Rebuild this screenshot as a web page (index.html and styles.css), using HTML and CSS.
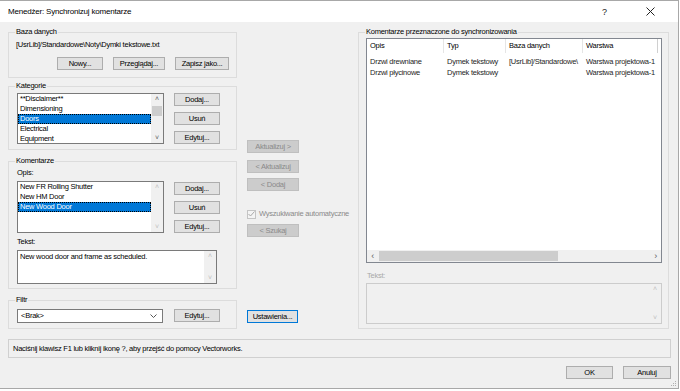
FILE: index.html
```html
<!DOCTYPE html>
<html lang="pl">
<head>
    <meta charset="utf-8">
    <link rel="stylesheet" href="styles.css">
</head>
<body>
<div class="window">
    <div class="titlebar">
        <span class="title">Menedżer: Synchronizuj komentarze</span>
        <span class="tb-help">?</span>
        <span class="tb-close">
            <svg width="9" height="9" viewBox="0 0 9 9"><path d="M0.5 0.5 L8.5 8.5 M8.5 0.5 L0.5 8.5" stroke="#222" stroke-width="1"/></svg>
        </span>
    </div>
    <div class="main">
        <div class="col-left">
            <div class="group g-baza">
                <div class="group-title">Baza danych</div>
                <div class="path">[UsrLib]/Standardowe\Noty\Dymki tekstowe.txt</div>
                <div class="btn-row">
                    <button class="btn w-nowy">Nowy...</button>
                    <button class="btn w-przeg">Przeglądaj...</button>
                    <button class="btn w-zapisz">Zapisz jako...</button>
                </div>
            </div>

            <div class="group g-kat">
                <div class="group-title">Kategorie</div>
                <div class="list-row">
                    <div class="listbox lb-kat">
                        <div class="items">
                            <div class="item">**Disclaimer**</div>
                            <div class="item">Dimensioning</div>
                            <div class="item selected">Doors</div>
                            <div class="item">Electrical</div>
                            <div class="item">Equipment</div>
                        </div>
                        <div class="vscroll">
                            <span class="arrow">&#x2C4;</span>
                            <span class="track"><span class="thumb thumb-kat"></span></span>
                            <span class="arrow">&#x2C5;</span>
                        </div>
                    </div>
                    <div class="btn-col">
                        <button class="btn">Dodaj...</button>
                        <button class="btn">Usuń</button>
                        <button class="btn">Edytuj...</button>
                    </div>
                </div>
            </div>

            <div class="group g-kom">
                <div class="group-title">Komentarze</div>
                <div class="label l-opis">Opis:</div>
                <div class="list-row">
                    <div class="listbox lb-kom">
                        <div class="items">
                            <div class="item">New FR Rolling Shutter</div>
                            <div class="item">New HM Door</div>
                            <div class="item selected">New Wood Door</div>
                        </div>
                        <div class="vscroll off">
                            <span class="arrow">&#x2C4;</span>
                            <span class="track"></span>
                            <span class="arrow">&#x2C5;</span>
                        </div>
                    </div>
                    <div class="btn-col btn-col-kom">
                        <button class="btn">Dodaj...</button>
                        <button class="btn">Usuń</button>
                        <button class="btn">Edytuj...</button>
                    </div>
                </div>
                <div class="label l-tekst">Tekst:</div>
                <div class="textbox tb-kom">
                    <div class="tb-text">New wood door and frame as scheduled.</div>
                    <div class="vscroll off">
                        <span class="arrow">&#x2C4;</span>
                        <span class="track"></span>
                        <span class="arrow">&#x2C5;</span>
                    </div>
                </div>
            </div>

            <div class="group g-filtr">
                <div class="group-title">Filtr</div>
                <div class="filtr-row">
                    <div class="select">
                        <span>&lt;Brak&gt;</span>
                        <svg width="7" height="4" viewBox="0 0 7 4"><path d="M0.5 0.5 L3.5 3.5 L6.5 0.5" fill="none" stroke="#555" stroke-width="1"/></svg>
                    </div>
                    <button class="btn">Edytuj...</button>
                </div>
            </div>
        </div>

        <div class="col-mid">
            <button class="btn disabled b-akt1">Aktualizuj &gt;</button>
            <button class="btn disabled b-akt2">&lt; Aktualizuj</button>
            <button class="btn disabled b-dodaj">&lt; Dodaj</button>
            <div class="check-row">
                <span class="checkbox">
                    <svg width="7" height="6" viewBox="0 0 7 6"><path d="M0.5 3 L2.5 5 L6.5 0.5" fill="none" stroke="#a8a8a8" stroke-width="1"/></svg>
                </span>
                <span class="check-label">Wyszukiwanie automatyczne</span>
            </div>
            <button class="btn disabled b-szukaj">&lt; Szukaj</button>
            <button class="btn default b-ust">Ustawienia...</button>
        </div>

        <div class="group g-sync">
            <div class="group-title">Komentarze przeznaczone do synchronizowania</div>
            <div class="listview">
                <div class="lv-head">
                    <span class="c-opis">Opis</span>
                    <span class="c-typ">Typ</span>
                    <span class="c-baza">Baza danych</span>
                    <span class="c-warstwa">Warstwa</span>
                </div>
                <div class="lv-body">
                    <div class="lv-row">
                        <span class="c-opis">Drzwi drewniane</span>
                        <span class="c-typ">Dymek tekstowy</span>
                        <span class="c-baza">[UsrLib]/Standardowe\</span>
                        <span class="c-warstwa">Warstwa projektowa-1</span>
                    </div>
                    <div class="lv-row">
                        <span class="c-opis">Drzwi płycinowe</span>
                        <span class="c-typ">Dymek tekstowy</span>
                        <span class="c-baza"></span>
                        <span class="c-warstwa">Warstwa projektowa-1</span>
                    </div>
                </div>
                <div class="hscroll">
                    <span class="arrow">&#x2039;</span>
                    <span class="htrack"><span class="hthumb"></span></span>
                    <span class="arrow">&#x203A;</span>
                </div>
            </div>
            <div class="label l-tekst2">Tekst:</div>
            <div class="textbox tb-sync">
                <div class="tb-text"></div>
                <div class="vscroll off">
                    <span class="arrow">&#x2C4;</span>
                    <span class="track"></span>
                    <span class="arrow">&#x2C5;</span>
                </div>
            </div>
        </div>
    </div>

    <div class="status">Naciśnij klawisz F1 lub kliknij ikonę ?, aby przejść do pomocy Vectorworks.</div>

    <div class="footer">
        <button class="btn w-ok">OK</button>
        <button class="btn w-anuluj">Anuluj</button>
        <svg class="grip" width="6" height="6" viewBox="0 0 6 6">
            <rect x="4" y="0" width="1" height="1" fill="#b0b0b0"/>
            <rect x="2" y="2" width="1" height="1" fill="#b0b0b0"/>
            <rect x="4" y="2" width="1" height="1" fill="#b0b0b0"/>
            <rect x="0" y="4" width="1" height="1" fill="#b0b0b0"/>
            <rect x="2" y="4" width="1" height="1" fill="#b0b0b0"/>
            <rect x="4" y="4" width="1" height="1" fill="#b0b0b0"/>
        </svg>
    </div>
</div>
</body>
</html>
```

FILE: styles.css
```css
* {
    box-sizing: border-box;
}

body {
    margin: 0;
    background: #ffffff;
    font-family: "Liberation Sans", Arial, sans-serif;
    font-size: 7.5px;
    letter-spacing: -0.25px;
    line-height: 10px;
    color: #000000;
}

.window {
    width: 679px;
    height: 389px;
    background: #f0f0f0;
    border-top: 1px solid #a8a8a8;
    border-right: 1px solid #a8a8a8;
    border-bottom: 1px solid #a8a8a8;
    position: relative;
}

/* title bar */
.titlebar {
    height: 21px;
    background: #ffffff;
    display: flex;
    align-items: center;
    padding-left: 8px;
}
.title {
    flex: 1;
    font-size: 8px;
    letter-spacing: -0.2px;
}
.tb-help {
    width: 14px;
    font-size: 9px;
    color: #222;
    margin-right: 30px;
}
.tb-close {
    width: 32px;
    display: flex;
}

/* main area */
.main {
    display: flex;
    padding: 10px 0 0 8px;
    height: 307px;
}
.col-left {
    width: 229px;
}
.col-mid {
    width: 111px;
    margin-left: 10px;
    display: flex;
    flex-direction: column;
    align-items: flex-start;
}

/* group boxes */
.group {
    border: 1px solid #dcdcdc;
    padding: 0 0 0 7px;
}
.group-title {
    margin-top: -6px;
    margin-left: -1px;
    width: fit-content;
    padding: 0 1px;
    background: #f0f0f0;
}
.g-baza {
    height: 46px;
}
.g-kat {
    height: 64px;
    margin-top: 8px;
}
.g-kom {
    height: 128px;
    margin-top: 11px;
}
.g-filtr {
    height: 29px;
    margin-top: 11px;
}
.g-sync {
    width: 311px;
    height: 297px;
}

.path {
    margin-top: 3px;
}
.label {
    margin-left: 1px;
}

/* buttons */
.btn {
    font-family: inherit;
    font-size: 7.5px;
    letter-spacing: -0.25px;
    line-height: 11px;
    height: 13px;
    width: 46px;
    padding: 0;
    margin: 0;
    background: #e1e1e1;
    border: 1px solid #adadad;
    color: #000;
    text-align: center;
}
.btn.disabled {
    background: #cccccc;
    border-color: #bfbfbf;
    color: #8a8a8a;
}
.btn.default {
    border-color: #0078d7;
}

.btn-row {
    display: flex;
    gap: 10px;
    margin-top: 7px;
    padding-left: 41px;
}
.w-nowy {
    width: 46px;
}
.w-przeg {
    width: 52px;
}
.w-zapisz {
    width: 54px;
}

.list-row {
    display: flex;
    gap: 10px;
    padding-left: 1px;
}
.btn-col {
    display: flex;
    flex-direction: column;
    gap: 6px;
    margin-top: 2px;
}
.btn-col-kom {
    margin-top: 1px;
}

/* list boxes */
.listbox {
    background: #ffffff;
    border: 1px solid #7a7a7a;
    display: flex;
    width: 147px;
}
.lb-kat {
    height: 51px;
    margin-top: 2px;
}
.lb-kom {
    height: 52px;
}
.l-opis {
    margin-top: 2px;
    margin-bottom: 3px;
}
.items {
    flex: 1;
    overflow: hidden;
}
.item {
    height: 10px;
    line-height: 10px;
    padding-left: 2px;
    white-space: nowrap;
}
.item.selected {
    background: #0078d7;
    color: #ffffff;
    outline: 1px dotted #000;
    outline-offset: -1px;
}

.vscroll {
    width: 12px;
    display: flex;
    flex-direction: column;
    align-items: center;
    background: #f0f0f0;
}
.vscroll .arrow {
    height: 10px;
    line-height: 10px;
    font-size: 7px;
    color: #606060;
}
.vscroll.off .arrow {
    color: #bfbfbf;
}
.vscroll .track {
    flex: 1;
    width: 100%;
}
.thumb-kat {
    display: block;
    margin: 2px 1px 0;
    height: 10px;
    background: #cdcdcd;
}

.l-tekst {
    margin-top: 4px;
    margin-bottom: 3px;
}
.textbox {
    background: #ffffff;
    border: 1px solid #7a7a7a;
    display: flex;
}
.tb-kom {
    width: 200px;
    height: 34px;
    margin-left: 1px;
}
.tb-text {
    flex: 1;
    padding: 1px 2px;
}

.filtr-row {
    display: flex;
    gap: 11px;
    margin-top: 4px;
    padding-left: 1px;
}
.select {
    width: 146px;
    height: 14px;
    background: #ffffff;
    border: 1px solid #7a7a7a;
    display: flex;
    align-items: center;
    justify-content: space-between;
    padding: 0 5px 0 3px;
}

/* middle column */
.col-mid .btn {
    width: 52px;
}
.b-akt1 {
    margin-top: 108px;
}
.b-akt2 {
    margin-top: 7px;
}
.b-dodaj {
    margin-top: 5px;
}
.check-row {
    display: flex;
    align-items: center;
    gap: 3px;
    margin-top: 18px;
    height: 10px;
}
.checkbox {
    width: 9px;
    height: 9px;
    border: 1px solid #c4c4c4;
    background: #f4f4f4;
    display: flex;
    align-items: center;
    justify-content: center;
}
.check-label {
    color: #8a8a8a;
    white-space: nowrap;
}
.b-szukaj {
    margin-top: 5px;
}
.col-mid .b-ust {
    margin-top: 73px;
    width: 51px;
}

/* right group */
.listview {
    margin-top: 1px;
    width: 296px;
    height: 225px;
    border: 1px solid #828790;
    background: #ffffff;
    display: flex;
    flex-direction: column;
}
.lv-head,
.lv-row {
    display: flex;
    white-space: nowrap;
}
.lv-head {
    height: 14px;
    line-height: 14px;
}
.lv-head span {
    border-right: 1px solid #e5e5e5;
    padding-left: 3px;
}
.lv-body {
    flex: 1;
    padding-top: 3px;
}
.lv-row {
    height: 11px;
    line-height: 11px;
    color: #1e1e1e;
}
.lv-row span {
    padding-left: 3px;
    overflow: hidden;
}
.c-opis {
    width: 77px;
}
.c-typ {
    width: 62px;
}
.c-baza {
    width: 77px;
}
.c-warstwa {
    width: 75px;
}
.lv-head .c-warstwa {
    border-right-color: #d0d0d0;
}

.hscroll {
    height: 12px;
    background: #f0f0f0;
    display: flex;
    align-items: center;
}
.hscroll .arrow {
    width: 11px;
    text-align: center;
    font-size: 9px;
    color: #606060;
}
.htrack {
    flex: 1;
    height: 100%;
    display: flex;
    align-items: center;
}
.hthumb {
    display: block;
    margin-left: 1px;
    width: 179px;
    height: 10px;
    background: #cdcdcd;
}

.l-tekst2 {
    margin-top: 8px;
    margin-bottom: 2px;
    color: #a8a8a8;
}
.tb-sync {
    width: 296px;
    height: 41px;
    background: #f0f0f0;
    border-color: #cccccc;
}

/* status and footer */
.status {
    margin: 10px 0 0 8px;
    width: 663px;
    height: 19px;
    border: 1px solid #d0d0d0;
    padding-left: 4px;
    line-height: 17px;
}
.footer {
    display: flex;
    justify-content: flex-end;
    gap: 10px;
    margin-top: 8px;
    padding-right: 7px;
}
.w-ok {
    width: 47px;
}
.w-anuluj {
    width: 48px;
}
.grip {
    position: absolute;
    right: 1px;
    bottom: 1px;
}
```
